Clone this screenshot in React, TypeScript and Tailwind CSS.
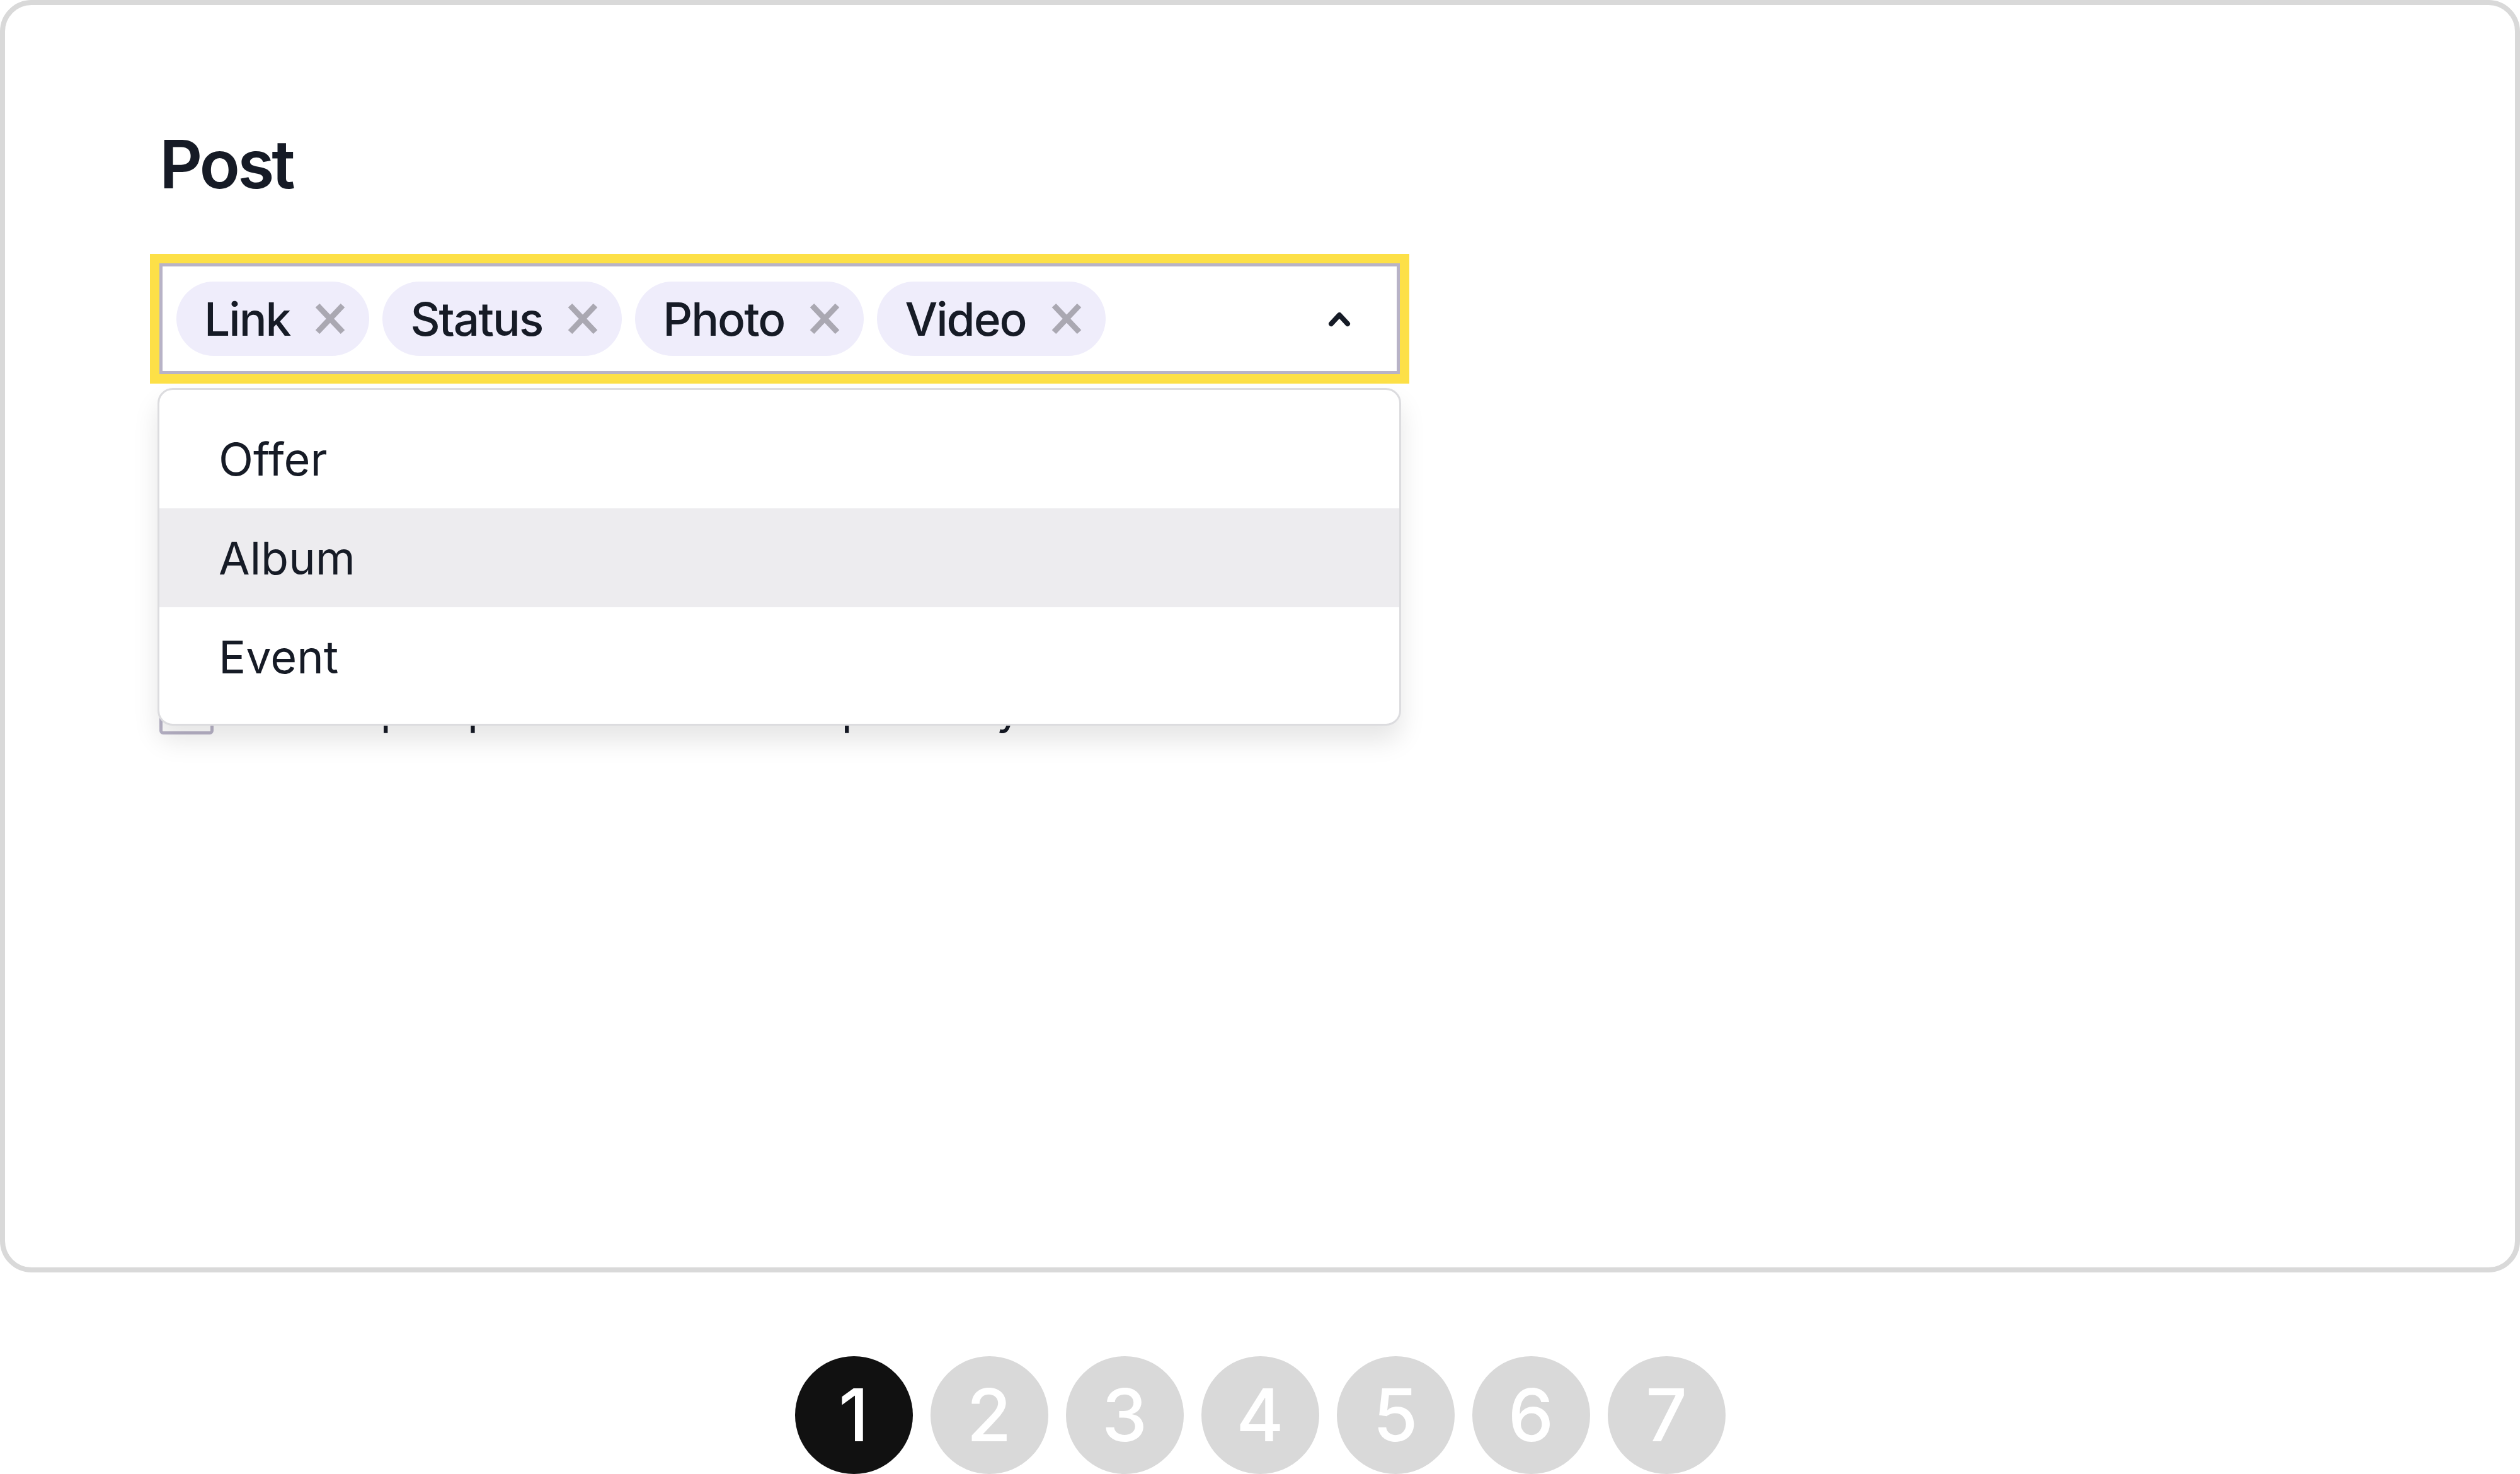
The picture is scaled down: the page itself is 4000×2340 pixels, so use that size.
import React from 'react';

const tags = ['Link', 'Status', 'Photo', 'Video'];
const options = ['Offer', 'Album', 'Event'];

function XIcon() {
    return (
        <svg width="48" height="48" viewBox="0 0 48 48" fill="none" stroke="#aaa8b2" strokeWidth="9" strokeLinecap="butt">
            <path d="M4 3 L44 45 M44 3 L4 45" />
        </svg>
    );
}

function ChevronUp() {
    return (
        <svg width="38" height="26" viewBox="0 0 38 26" fill="none" stroke="#161b26" strokeWidth="8" strokeLinecap="round" strokeLinejoin="round">
            <path d="M6 21 L19 7 L32 21" />
        </svg>
    );
}

export default function App() {
    return (
        <div className="w-[4000px] h-[2340px] bg-white overflow-hidden text-[#161b26]" style={{ fontFamily: 'Inter, "Noto Sans", sans-serif' }}>
            {/* card */}
            <div className="h-[2020px] border-[8px] border-[#d9d9d9] rounded-[50px] pl-[245px] pt-[200px]">
                <h1 className="text-[106px] leading-none font-semibold tracking-[-4px]">Post</h1>

                <div className="relative mt-[104px] w-[1969px]">
                    {/* select box */}
                    <div className="flex items-center justify-between border-[5px] border-[#b8b3c7] ring-[15px] ring-[#fde047] bg-white px-[22px] py-[24px]">
                        <div className="flex gap-[21px]">
                            {tags.map((t) => (
                                <div key={t} className="flex items-center h-[118px] rounded-full bg-[#efedfb] pl-[44px] pr-[38px] gap-[40px]">
                                    <span className="text-[73px] leading-none font-medium tracking-[-2px]">{t}</span>
                                    <XIcon />
                                </div>
                            ))}
                        </div>
                        <div className="mr-[50px]">
                            <ChevronUp />
                        </div>
                    </div>

                    {/* dropdown menu */}
                    <div className="absolute left-[-3px] top-[198px] w-[1974px] z-10 bg-white border-[3px] border-[#dcdcdf] rounded-[24px] pt-[31px] pb-[28px] shadow-[0_24px_40px_rgba(0,0,0,0.10)]">
                        {options.map((o) => (
                            <div key={o} className={`flex items-center h-[157px] pl-[94px] text-[72px] leading-none ${o === 'Album' ? 'bg-[#edecef]' : ''}`}>
                                {o}
                            </div>
                        ))}
                    </div>

                    {/* checkbox row, mostly behind the menu */}
                    <div className="flex items-center gap-[41px] mt-[486px]">
                        <div className="w-[86px] h-[86px] border-[5px] border-[#b8b3c7] rounded-[6px]" />
                        <span className="text-[72px] leading-none tracking-[3px]">Allow people to comment publicly</span>
                    </div>
                </div>
            </div>

            {/* steps */}
            <div className="flex justify-center gap-[28px] mt-[133px]">
                {[1, 2, 3, 4, 5, 6, 7].map((n) => (
                    <div
                        key={n}
                        className={`w-[187px] h-[187px] rounded-full flex items-center justify-center text-white text-[115px] leading-none font-medium ${n === 1 ? 'bg-[#111111]' : 'bg-[#d9d9d9]'}`}
                    >
                        {n}
                    </div>
                ))}
            </div>
        </div>
    );
}
